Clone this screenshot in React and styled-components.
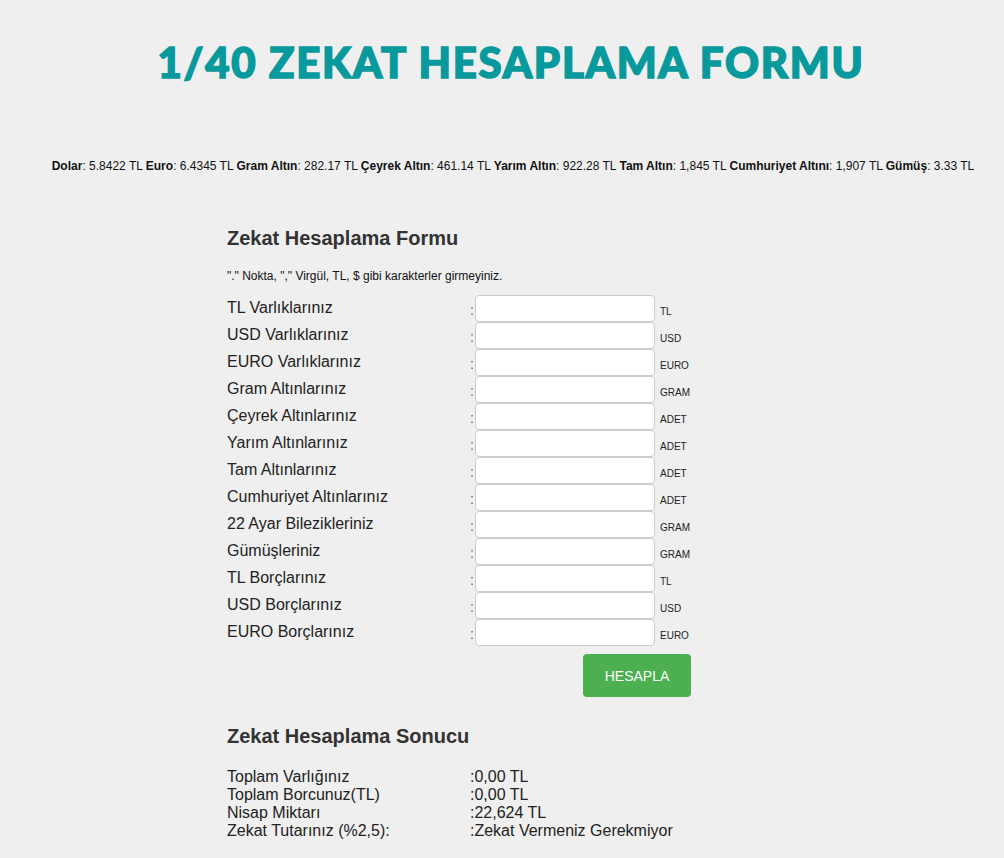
import React from 'react'
import styled, { createGlobalStyle } from 'styled-components'

const GlobalStyle = createGlobalStyle`
body {
  margin: 0;
  background: #efefef;
  font-family: "Liberation Sans", Arial, sans-serif;
  color: #333;
}
`

const Page = styled.div`
display: flex;
flex-direction: column;
align-items: center;
padding: 36px 0 0 18px;
`

const Title = styled.h1`
margin: 0;
font-family: "Lato", sans-serif;
font-weight: 900;
font-size: 42px;
line-height: 52px;
letter-spacing: 1.7px;
color: #08999c;
-webkit-text-stroke: 1.5px #08999c;
`

const Ticker = styled.p`
margin: 70px 0 0 4px;
font-size: 12px;
line-height: 16px;
color: #111;
b { font-weight: bold; }
`

const FormBox = styled.div`
align-self: flex-start;
width: 465px;
margin: 52px 0 0 209px;
`

const Heading = styled.h2`
margin: 0;
font-size: 20px;
line-height: 24px;
font-weight: bold;
color: #333;
`

const Note = styled.p`
margin: 19px 0 12px 0;
font-size: 12px;
line-height: 14px;
color: #111;
`

const Grid = styled.div`
display: grid;
grid-template-columns: 243px 5px 180px auto;
grid-auto-rows: 27px;
align-items: center;
`

const Label = styled.span`
font-size: 16px;
line-height: 18px;
color: #222;
align-self: start;
margin-top: 4px;
`

const Colon = styled.span`
font-size: 14px;
color: #666;
margin-top: 2px;
`

const Input = styled.input`
box-sizing: border-box;
width: 180px;
height: 27px;
border: 1px solid #ccc;
border-radius: 4px;
background: #fff;
`

const Unit = styled.span`
font-size: 10px;
color: #222;
padding-left: 5px;
margin-top: 5px;
`

const ButtonRow = styled.div`
display: flex;
justify-content: flex-end;
width: 464px;
margin-top: 8px;
`

const Button = styled.button`
width: 108px;
height: 43px;
border: none;
border-radius: 4px;
background: #4caf50;
color: #fff;
font-family: "Liberation Sans", Arial, sans-serif;
font-size: 14px;
`

const ResultHeading = styled(Heading)`
margin-top: 27px;
`

const Results = styled.div`
display: grid;
grid-template-columns: 243px auto;
margin-top: 20px;
font-size: 16px;
line-height: 18px;
color: #222;
`

const fields = [
  ['TL Varlıklarınız', 'TL'],
  ['USD Varlıklarınız', 'USD'],
  ['EURO Varlıklarınız', 'EURO'],
  ['Gram Altınlarınız', 'GRAM'],
  ['Çeyrek Altınlarınız', 'ADET'],
  ['Yarım Altınlarınız', 'ADET'],
  ['Tam Altınlarınız', 'ADET'],
  ['Cumhuriyet Altınlarınız', 'ADET'],
  ['22 Ayar Bilezikleriniz', 'GRAM'],
  ['Gümüşleriniz', 'GRAM'],
  ['TL Borçlarınız', 'TL'],
  ['USD Borçlarınız', 'USD'],
  ['EURO Borçlarınız', 'EURO'],
]

const results = [
  ['Toplam Varlığınız', ':0,00 TL'],
  ['Toplam Borcunuz(TL)', ':0,00 TL'],
  ['Nisap Miktarı', ':22,624 TL'],
  ['Zekat Tutarınız (%2,5):', ':Zekat Vermeniz Gerekmiyor'],
]

export default function App() {
  return (
    <Page>
      <GlobalStyle />
      <Title>1/40 ZEKAT HESAPLAMA FORMU</Title>
      <Ticker>
        <b>Dolar</b>: 5.8422 TL <b>Euro</b>: 6.4345 TL <b>Gram Altın</b>: 282.17 TL <b>Çeyrek Altın</b>: 461.14 TL <b>Yarım Altın</b>: 922.28 TL <b>Tam Altın</b>: 1,845 TL <b>Cumhuriyet Altını</b>: 1,907 TL <b>Gümüş</b>: 3.33 TL
      </Ticker>
      <FormBox>
        <Heading>Zekat Hesaplama Formu</Heading>
        <Note>"." Nokta, "," Virgül, TL, $ gibi karakterler girmeyiniz.</Note>
        <Grid>
          {fields.map(([label, unit]) => (
            <React.Fragment key={label}>
              <Label>{label}</Label>
              <Colon>:</Colon>
              <Input type="text" />
              <Unit>{unit}</Unit>
            </React.Fragment>
          ))}
        </Grid>
        <ButtonRow>
          <Button>HESAPLA</Button>
        </ButtonRow>
        <ResultHeading>Zekat Hesaplama Sonucu</ResultHeading>
        <Results>
          {results.map(([label, value]) => (
            <React.Fragment key={label}>
              <span>{label}</span>
              <span>{value}</span>
            </React.Fragment>
          ))}
        </Results>
      </FormBox>
    </Page>
  )
}
